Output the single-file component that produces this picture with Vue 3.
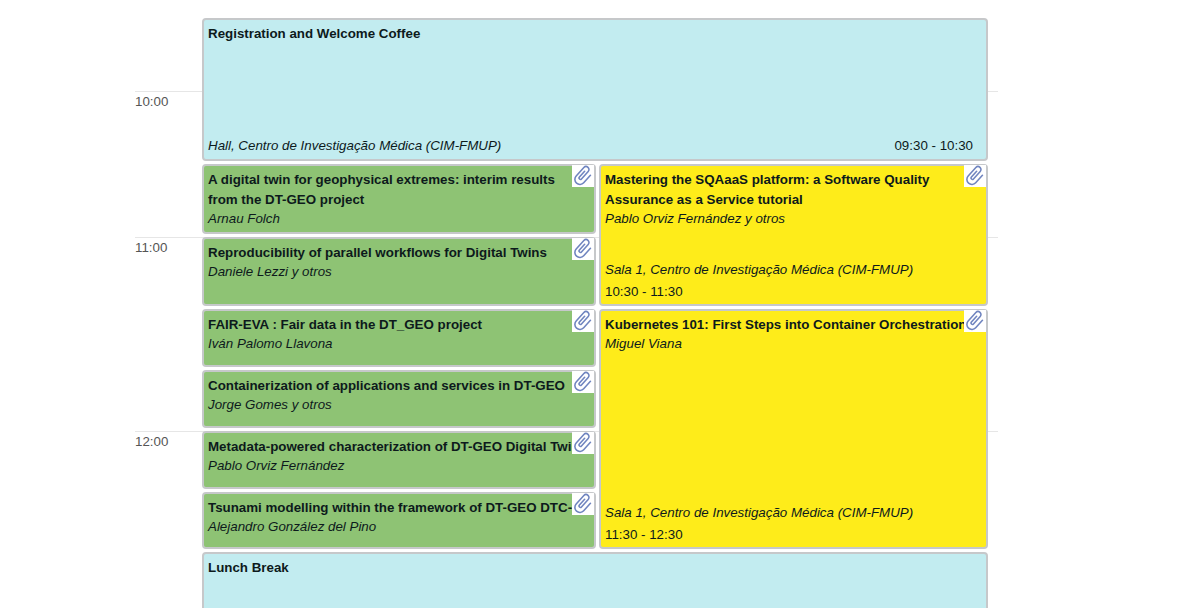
<script setup>
const hours = [
  { label: '10:00', top: 73 },
  { label: '11:00', top: 219 },
  { label: '12:00', top: 413 },
]
const leftTalks = [
  { title: 'A digital twin for geophysical extremes: interim results from the DT-GEO project', who: 'Arnau Folch', h: 70, wrap: true },
  { title: 'Reproducibility of parallel workflows for Digital Twins', who: 'Daniele Lezzi y otros', h: 69 },
  { title: 'FAIR-EVA : Fair data in the DT_GEO project', who: 'Iván Palomo Llavona', h: 58 },
  { title: 'Containerization of applications and services in DT-GEO', who: 'Jorge Gomes y otros', h: 58 },
  { title: 'Metadata-powered characterization of DT-GEO Digital Twi', who: 'Pablo Orviz Fernández', h: 58 },
  { title: 'Tsunami modelling within the framework of DT-GEO DTC-', who: 'Alejandro González del Pino', h: 57 },
]
const rightTalks = [
  { title: 'Mastering the SQAaaS platform: a Software Quality Assurance as a Service tutorial', who: 'Pablo Orviz Fernández y otros', place: 'Sala 1, Centro de Investigação Médica (CIM-FMUP)', time: '10:30 - 11:30', h: 142, wrap: true },
  { title: 'Kubernetes 101: First Steps into Container Orchestration', who: 'Miguel Viana', place: 'Sala 1, Centro de Investigação Médica (CIM-FMUP)', time: '11:30 - 12:30', h: 240 },
]
const clipPath = 'M17 7v11a5.5 5.5 0 0 1-11 0V5.5a3.2 3.2 0 0 1 6.4 0V16.5a1.5 1.5 0 0 1-3 0V8'
</script>

<template>
  <div class="page">
    <div class="timetable">
      <div v-for="hour in hours" :key="hour.label" class="hour" :style="{ top: hour.top + 'px' }">
        <span class="hour-label">{{ hour.label }}</span>
      </div>

      <div class="blocks">
        <section class="block break reg">
          <h3 class="title">Registration and Welcome Coffee</h3>
          <div class="foot-row">
            <em class="place">Hall, Centro de Investigação Médica (CIM-FMUP)</em>
            <span class="time">09:30 - 10:30</span>
          </div>
        </section>

        <div class="columns">
          <div class="col col-left">
            <section
              v-for="talk in leftTalks"
              :key="talk.title"
              class="block talk green"
              :style="{ height: talk.h + 'px' }"
            >
              <h3 class="title" :class="talk.wrap ? 'wrapped' : 'nowrap'">{{ talk.title }}</h3>
              <em class="who">{{ talk.who }}</em>
              <span class="clip">
                <svg viewBox="0 0 24 24" width="22" height="22" fill="none" stroke="#6f84bf" stroke-width="1.7" stroke-linecap="round" stroke-linejoin="round">
                  <path :d="clipPath" transform="translate(.5 -1) rotate(42 11.5 13)" />
                </svg>
              </span>
            </section>
          </div>
          <div class="col col-right">
            <section
              v-for="talk in rightTalks"
              :key="talk.title"
              class="block talk yellow"
              :style="{ height: talk.h + 'px' }"
            >
              <h3 class="title" :class="talk.wrap ? 'wrapped' : 'nowrap'">{{ talk.title }}</h3>
              <em class="who">{{ talk.who }}</em>
              <div class="foot">
                <em class="place">{{ talk.place }}</em>
                <span class="time-line">{{ talk.time }}</span>
              </div>
              <span class="clip">
                <svg viewBox="0 0 24 24" width="22" height="22" fill="none" stroke="#6f84bf" stroke-width="1.7" stroke-linecap="round" stroke-linejoin="round">
                  <path :d="clipPath" transform="translate(.5 -1) rotate(42 11.5 13)" />
                </svg>
              </span>
            </section>
          </div>
        </div>

        <section class="block break lunch">
          <h3 class="title">Lunch Break</h3>
        </section>
      </div>
    </div>
  </div>
</template>

<style>
html, body { margin: 0; background: #fff; overflow: hidden; }
</style>

<style scoped>
.page {
  height: 608px;
  overflow: hidden;
  padding: 18px 0 0 135px;
  box-sizing: border-box;
  font-family: "Liberation Sans", Arial, sans-serif;
  font-size: 13.33px;
  color: #0d1a1c;
}
.timetable {
  position: relative;
  width: 863px;
}
.hour {
  position: absolute;
  left: 0;
  right: 0;
  border-top: 1px solid #e6e6e6;
}
.hour-label {
  position: absolute;
  left: 0;
  top: 1px;
  color: #555;
  line-height: 18px;
}
.blocks {
  position: relative;
  margin-left: 67px;
  width: 786px;
  display: flex;
  flex-direction: column;
  gap: 3px;
}
.columns {
  display: flex;
  gap: 3px;
}
.col {
  display: flex;
  flex-direction: column;
  gap: 3px;
}
.col-left { width: 394px; }
.col-right { width: 389px; }
.block {
  position: relative;
  box-sizing: border-box;
  border: 2px solid #c6c8ca;
  border-radius: 4px;
  padding: 4px 4px 2px;
  line-height: 20px;
}
.break { background: #c2ecf0; }
.green { background: #8ec374; }
.yellow { background: #feec1a; }
.reg {
  height: 143px;
  padding-bottom: 3px;
  display: flex;
  flex-direction: column;
  justify-content: space-between;
}
.lunch { height: 120px; }
.talk {
  display: flex;
  flex-direction: column;
}
.title {
  margin: 0;
  font-size: 13.33px;
  line-height: 20px;
  font-weight: 700;
}
.wrapped { padding-right: 18px; }
.nowrap { white-space: nowrap; }
.who { line-height: 18px; }
.foot-row {
  display: flex;
  justify-content: space-between;
  padding-right: 9px;
  line-height: 20px;
}
.foot {
  margin-top: auto;
  display: flex;
  flex-direction: column;
  gap: 2px;
  line-height: 20px;
}
.clip {
  position: absolute;
  top: -1px;
  right: 0;
  width: 22px;
  height: 22px;
  background: #fff;
  display: flex;
  align-items: center;
  justify-content: center;
}
</style>
